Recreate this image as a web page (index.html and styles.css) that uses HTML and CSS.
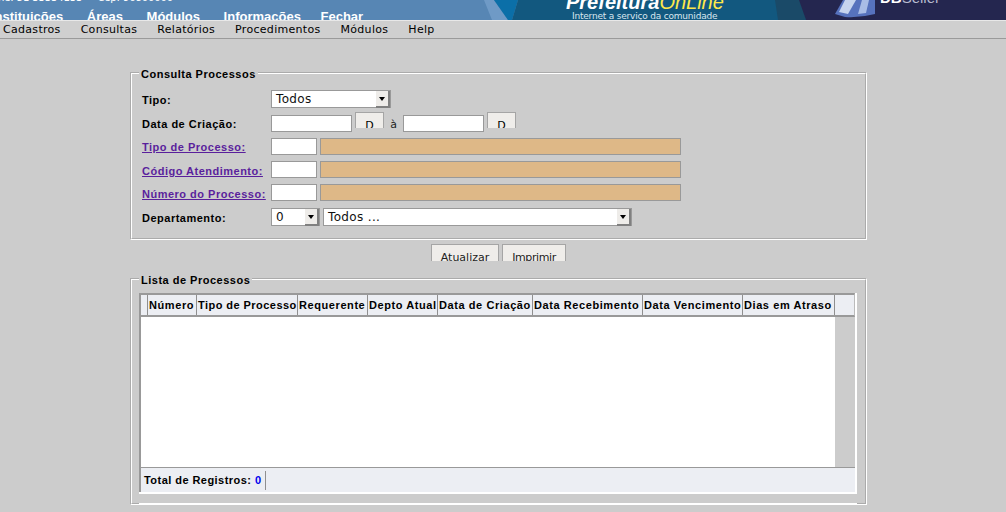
FILE: index.html
```html
<!DOCTYPE html>
<html lang="pt">
<head>
<meta charset="utf-8">
<title>Consulta Processos</title>
<link rel="stylesheet" href="styles.css">
</head>
<body>
<header class="banner">
  <svg class="banner-art" width="1006" height="20" viewBox="0 0 1006 20">
    <polygon points="484,0 494,0 508,20 492,20" fill="#6f9ac6"/>
    <polygon points="494,0 518,0 512,20 508,20" fill="#0b6fa8"/>
    <polygon points="518,0 1006,0 1006,20 512,20" fill="#12587f"/>
    <polygon points="775,0 800,0 806,20 778,20" fill="#1a4a68"/>
    <polygon points="799,0 1006,0 1006,20 806,20" fill="#24264f"/>
    <path d="M843 0 L835 14 L845 17 Q860 18 875 14 V0Z" fill="#5672bd"/>
    <path d="M845 0 L839 12 L848 14 L856 0Z" fill="#c6d4ee"/>
    <path d="M862 0 L858 14 L866 13 L869 0Z" fill="#a9bde6"/>
  </svg>
  <div class="contact">one: 51 33334133 <span class="cep">Cep: 96800000</span></div>
  <nav class="top-nav">
    <a>Instituições</a><a>Áreas</a><a>Módulos</a><a>Informações</a><a class="last">Fechar</a>
  </nav>
  <div class="brand"><b>Prefeitura</b><i>OnLine</i></div>
  <div class="tagline">Internet a serviço da comunidade</div>
  <div class="dbs"><b>DB</b>Seller</div>
</header>
<nav class="menu">
  <a>Cadastros</a><a>Consultas</a><a>Relatórios</a><a>Procedimentos</a><a>Módulos</a><a>Help</a>
</nav>
<main class="content">
  <fieldset class="panel panel-form">
    <legend>Consulta Processos</legend>
    <div class="form-grid">
      <div class="label">Tipo:</div>
      <div class="row">
        <div class="select select-tipo"><span>Todos</span><i class="arrow"></i></div>
      </div>
      <div class="label up">Data de Criação:</div>
      <div class="row">
        <div class="input date"></div><div class="btn-d"><span>D</span></div>
        <span class="ate">à</span>
        <div class="input date"></div><div class="btn-d"><span>D</span></div>
      </div>
      <a class="label link up">Tipo de Processo:</a>
      <div class="row"><div class="input code"></div><div class="input desc"></div></div>
      <a class="label link">Código Atendimento:</a>
      <div class="row"><div class="input code"></div><div class="input desc"></div></div>
      <a class="label link">Número do Processo:</a>
      <div class="row"><div class="input code"></div><div class="input desc"></div></div>
      <div class="label">Departamento:</div>
      <div class="row">
        <div class="select select-dep"><span>0</span><i class="arrow"></i></div>
        <div class="select select-all"><span>Todos ...</span><i class="arrow"></i></div>
      </div>
    </div>
  </fieldset>
  <div class="actions">
    <div class="btn btn-a"><span>Atualizar</span></div>
    <div class="btn btn-i"><span>Imprimir</span></div>
  </div>
  <fieldset class="panel panel-list">
    <legend>Lista de Processos</legend>
    <div class="grid-frame">
      <div class="grid">
        <div class="grid-head">
          <div class="th c0"></div>
          <div class="th c1">Número</div>
          <div class="th c2">Tipo de Processo</div>
          <div class="th c3">Requerente</div>
          <div class="th c4">Depto Atual</div>
          <div class="th c5">Data de Criação</div>
          <div class="th c6">Data Recebimento</div>
          <div class="th c7">Data Vencimento</div>
          <div class="th c8">Dias em Atraso</div>
          <div class="th c9"></div>
        </div>
        <div class="grid-body">
          <div class="rows"></div>
          <div class="scroll"></div>
        </div>
        <div class="grid-foot"><div class="total">Total de Registros: <span class="count">0</span></div></div>
      </div>
    </div>
  </fieldset>
</main>
</body>
</html>
```
FILE: styles.css
```css
* { box-sizing: border-box; }
html, body { margin: 0; padding: 0; }
body {
  width: 1006px;
  height: 512px;
  overflow: hidden;
  background: #cccccc;
  font-family: "DejaVu Sans", sans-serif;
  color: #000;
}
.banner {
  position: relative;
  height: 20px;
  background: #5786b4;
  overflow: hidden;
}
.banner-art { position: absolute; left: 0; top: 0; }
.contact {
  position: absolute;
  left: -8px;
  top: -8px;
  font: 10px/12px "DejaVu Sans", sans-serif;
  letter-spacing: -.1px;
  color: #fff;
  white-space: nowrap;
}
.cep { margin-left: 12px; }
.top-nav {
  position: absolute;
  left: -9px;
  top: 9px;
  display: flex;
  gap: 23.6px;
  font: bold 13px/16px "Liberation Sans", sans-serif;
  color: #fff;
}
.top-nav .last { margin-left: -4px; }
.brand {
  position: absolute;
  left: 566px;
  top: -9px;
  font: italic 20px/22px "Liberation Sans", sans-serif;
  color: #ffe84a;
  white-space: nowrap;
}
.brand b { color: #fff; }
.brand i { font-weight: normal; }
.tagline {
  position: absolute;
  left: 572px;
  top: 10px;
  font: 9px/12px "DejaVu Sans", sans-serif;
  letter-spacing: -.2px;
  color: #d8e6ee;
  white-space: nowrap;
}
.dbs {
  position: absolute;
  left: 880px;
  top: -10px;
  font: 15px/16px "Liberation Sans", sans-serif;
  color: #b8bcd0;
}
.dbs b { color: #fff; }
.menu {
  display: flex;
  align-items: center;
  gap: 20px;
  height: 19px;
  padding: 0 0 0 3px;
  background: #cfcfcf;
  border-top: 1px solid #e8e8e8;
  border-bottom: 1px solid #9a9a9a;
  font-size: 11px;
  letter-spacing: .3px;
  color: #000;
}
.content {
  padding: 26px 0 0 130px;
  width: 867px;
}
.panel {
  margin: 0;
  width: 737px;
  min-width: 0;
  padding: 0;
  border: 2px groove #ffffff;
}
.panel legend {
  margin-left: 7px;
  padding: 3px 2px 0;
  font: bold 11px/13px "Liberation Sans", sans-serif;
  letter-spacing: .5px;
}
.panel-form { height: 175px; }
.form-grid {
  display: grid;
  grid-template-columns: 129px 1fr;
  grid-template-rows: 25px 23px 23px 23px 24px 23px;
  padding: 9px 0 0 10px;
  align-items: start;
}
.label {
  padding-top: 4px;
  font: bold 11px/13px "Liberation Sans", sans-serif;
  letter-spacing: .5px;
  white-space: nowrap;
  color: #000;
}
.label.up { padding-top: 3px; }
.link { color: #5a1f9c; text-decoration: underline; }
.row { display: flex; align-items: flex-start; }
.input { height: 17px; border: 1px solid #999; background: #fff; }
.date { width: 81px; }
.code { width: 46px; }
.desc { width: 361px; margin-left: 3px; background: #deb887; }
.btn-d {
  width: 29px;
  height: 16px;
  margin: -3px 0 0 3px;
  border: 1px solid #a5a5a5;
  border-bottom: 0;
  background: #efedea;
  overflow: hidden;
  text-align: center;
  font-size: 11px;
  line-height: 26px;
}
.ate { width: 19px; text-align: center; font-size: 11px; line-height: 19px; color: #222; }
.select {
  position: relative;
  height: 18px;
  background: #fff;
  border: 1px solid #999;
  font-size: 12px;
  line-height: 16px;
  padding-left: 4px;
  letter-spacing: .35px;
  white-space: nowrap;
  color: #111;
}
.select-tipo { width: 120px; }
.select-dep { width: 49px; }
.select-all { width: 309px; margin-left: 3px; }
.arrow {
  position: absolute;
  right: 0;
  top: 0;
  width: 14px;
  height: 17px;
  background: #eeece9;
  border-right: 2px solid #808080;
  border-bottom: 2px solid #808080;
}
.arrow::after {
  content: "";
  position: absolute;
  left: 3px;
  top: 6px;
  border: 3.5px solid transparent;
  border-top: 4px solid #000;
  border-bottom: 0;
}
.actions {
  display: flex;
  justify-content: center;
  gap: 3px;
  height: 31px;
  padding-top: 4px;
  width: 737px;
}
.btn {
  height: 17px;
  border: 1px solid #a5a5a5;
  border-bottom: 0;
  background: #efedea;
  overflow: hidden;
  font-size: 11px;
  line-height: 26px;
  text-align: center;
  color: #222;
}
.btn-a { width: 68px; }
.btn-i { width: 64px; letter-spacing: -.4px; }
.panel-list { height: 234px; }
.grid-frame {
  width: 718px;
  height: 211px;
  margin: 6px 0 0 7px;
  border-bottom: 1px solid #fff;
}
.grid {
  display: flex;
  flex-direction: column;
  height: 201px;
  background: #fff;
  border-right: 2px solid #fff;
}
.grid-head {
  display: flex;
  flex: none;
  height: 24px;
  background: #eceef3;
  border: 2px solid #999;
  border-right: 1px solid #bbb;
}
.th {
  padding-left: 1px;
  border-right: 1px solid #8f8f8f;
  font: bold 11px/20px "Liberation Sans", sans-serif;
  letter-spacing: .58px;
  white-space: nowrap;
  overflow: hidden;
}
.c0 { width: 7px; }
.c1 { width: 49px; }
.c2 { width: 101px; letter-spacing: .45px; }
.c3 { width: 70px; }
.c4 { width: 70px; }
.c5 { width: 95px; }
.c6 { width: 110px; }
.c7 { width: 100px; }
.c8 { width: 92px; }
.c9 { flex: 1; border-right: 0; }
.grid-body { display: flex; flex: none; height: 150px; border-left: 2px solid #999; }
.rows { flex: 1; background: #fff; }
.scroll { width: 20px; background: #cccccc; }
.grid-foot {
  flex: 1;
  background: #eceef3;
  border-top: 1px solid #999;
  border-left: 2px solid #999;
  margin-bottom: 2px;
}
.total {
  display: inline-block;
  height: 19px;
  margin-top: 3px;
  padding: 0 4px 0 3px;
  border-right: 1px solid #8f8f8f;
  font: bold 11px/19px "Liberation Sans", sans-serif;
  letter-spacing: .45px;
}
.count { color: #0000ee; }
```
